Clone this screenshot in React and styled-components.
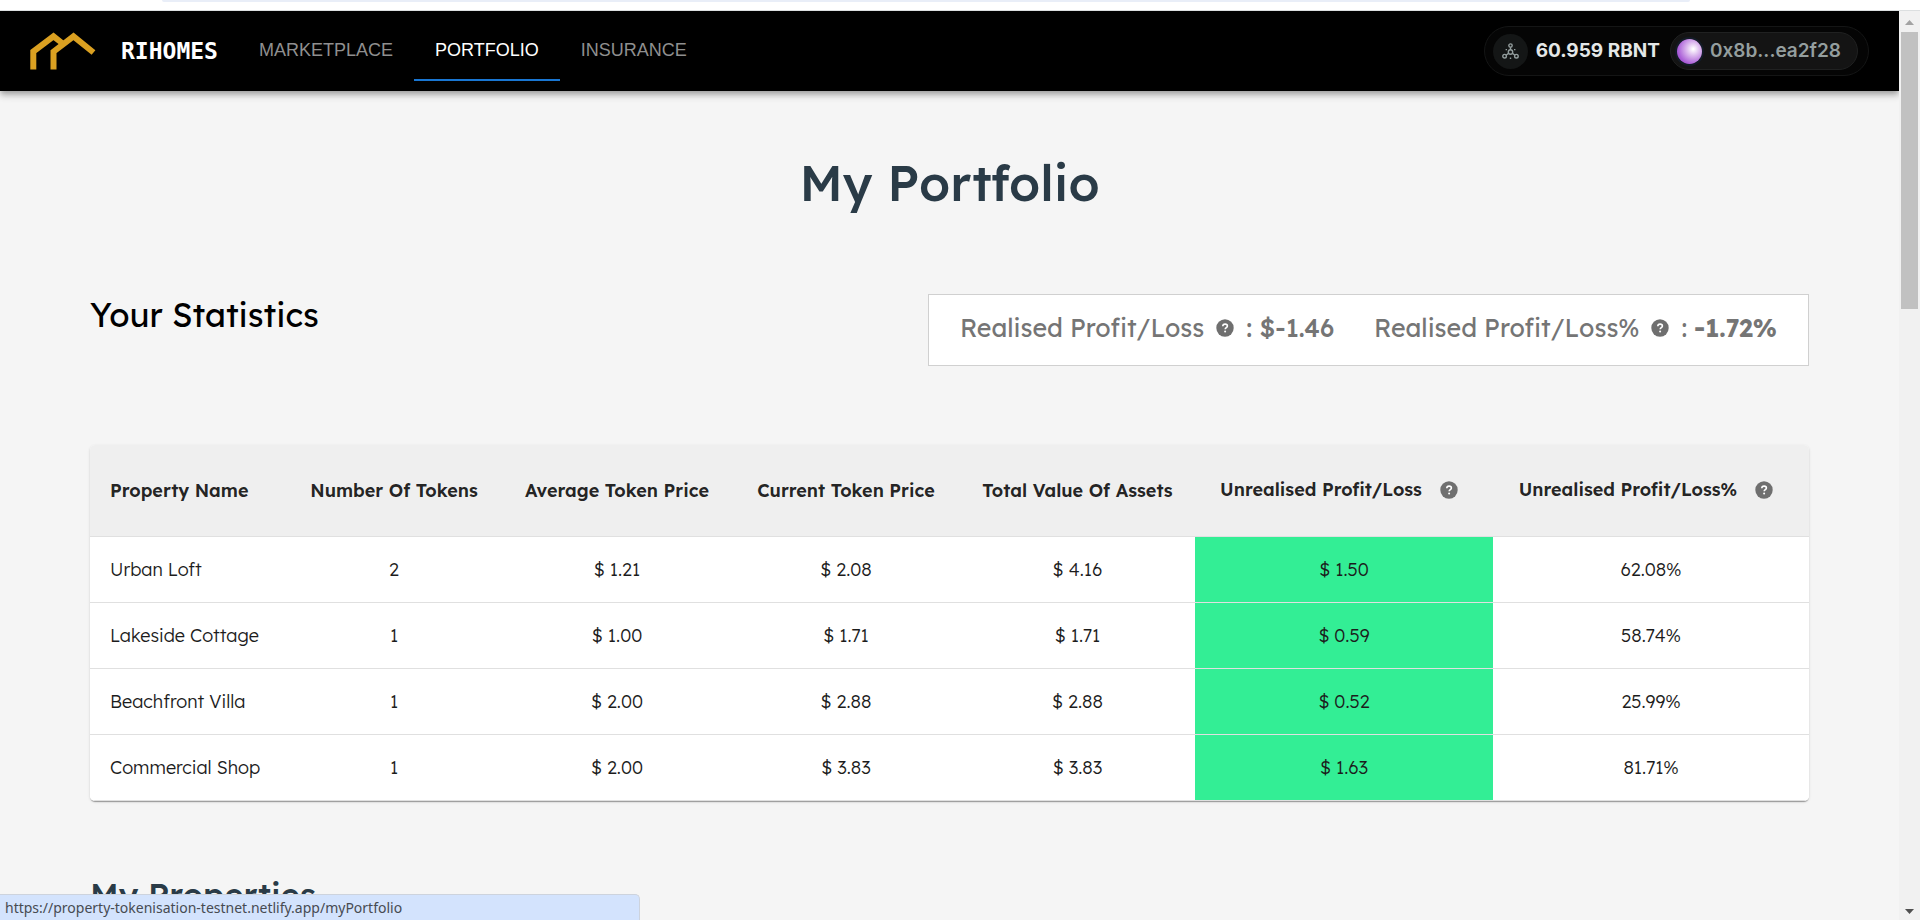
import React from "react";
import styled, { createGlobalStyle, css } from "styled-components";

const GlobalStyle = createGlobalStyle`
  *, *::before, *::after { box-sizing: border-box; }
  body { margin: 0; background: #f5f5f5; font-family: Lexend, Inter, sans-serif; color: rgba(0, 0, 0, 0.87); }
  h1, h2 { margin: 0; }
`;

const Screen = styled.div`
  display: grid;
  grid-template-rows: 11px minmax(0, 1fr);
  height: 100vh;
  overflow: hidden;
`;

const BrowserEdge = styled.div`
  padding: 0 230px 0 162px;
  background: #fff;
  border-bottom: 1px solid #dcdfe0;
`;

const AddressBar = styled.div`
  height: 2px;
  background: #e9eef8;
  border-radius: 0 0 6px 6px;
`;

const Viewport = styled.div`
  display: grid;
  grid-template-columns: minmax(0, 1fr) 21px;
  min-height: 0;
`;

const Page = styled.div`
  overflow: hidden;
`;

const AppBar = styled.header`
  display: flex;
  align-items: center;
  height: 80px;
  padding: 0 30px;
  background: #000;
  box-shadow: 0 3px 5px -1px rgba(0, 0, 0, 0.2), 0 5px 6px rgba(0, 0, 0, 0.14), 0 1px 12px rgba(0, 0, 0, 0.12);
`;

const Logo = styled.svg`
  width: 66px;
  height: 40px;
  fill: none;
  stroke: #daa021;
  stroke-width: 6;
`;

const Brand = styled.a`
  margin-left: 25px;
  color: #fff;
  font: 700 23px/30px "DejaVu Sans Mono", monospace;
  text-decoration: none;
`;

const Tabs = styled.nav`
  display: flex;
  margin-left: 20px;
`;

const Tab = styled.a`
  padding: 18px 21px;
  border-bottom: 2px solid ${(p) => (p.$active ? "#1976d2" : "transparent")};
  color: ${(p) => (p.$active ? "#fff" : "#8f8f8f")};
  font: 18px/22px "Liberation Sans", Arial, sans-serif;
  text-decoration: none;
`;

const Wallet = styled.div`
  display: flex;
  align-items: center;
  height: 50px;
  margin-left: auto;
  padding: 0 10px 0 8px;
  background: #050505;
  border: 1px solid #141515;
  border-radius: 25px;
  color: #e4e7e7;
  font: 700 19px/26px Inter, sans-serif;
`;

const Network = styled.span`
  display: grid;
  place-items: center;
  width: 35px;
  height: 35px;
  margin-right: 8px;
  background: #141616;
  border-radius: 50%;

  svg { width: 17px; height: 17px; fill: none; stroke: #949e9e; stroke-width: 1.4; }
`;

const Account = styled.button`
  display: flex;
  align-items: center;
  gap: 8px;
  height: 38px;
  margin-left: 10px;
  padding: 0 16px 0 6px;
  background: #141414;
  border: 1px solid #202121;
  border-radius: 19px;
  color: #949e9e;
  font: 600 19px/26px Inter, sans-serif;
`;

const Avatar = styled.span`
  width: 25px;
  height: 25px;
  border-radius: 50%;
  background: radial-gradient(circle at 65% 40%, #fff 2%, #dcb9ee 30%, #ab5fd8 68%, #8a36c8 100%);
  box-shadow: 0 0 0 2px #141c28;
`;

const Main = styled.main`
  padding: 60px 90px;
`;

const Title = styled.h1`
  color: #2a3b47;
  font-size: 50px;
  font-weight: 500;
  line-height: 64px;
  text-align: center;
`;

const Summary = styled.section`
  display: flex;
  justify-content: space-between;
  align-items: flex-start;
  margin: 79px 0;
`;

const Heading = styled.h2`
  color: ${(p) => (p.$tone === "slate" ? "#2a3b47" : "#000")};
  font-size: 33px;
  font-weight: ${(p) => (p.$tone === "slate" ? 500 : 400)};
  line-height: 42px;
`;

const Totals = styled.div`
  display: flex;
  gap: 40px;
  padding: 17px 31px 21px;
  background: #fff;
  border: 1px solid #d0d0d0;
  color: #757575;
  font-size: 25px;
  font-weight: 400;
  line-height: 32px;
`;

const Total = styled.span`
  display: flex;
  align-items: center;
  gap: 12px;
  white-space: nowrap;

  b { font-weight: 500; }
  strong { font-weight: 700; }
`;

const HelpIcon = styled.svg`
  flex: none;
  width: 18px;
  height: 18px;
`;

const TableCard = styled.div`
  overflow: hidden;
  background: #fff;
  border-radius: 5px;
  box-shadow: 0 2px 1px -1px rgba(0, 0, 0, 0.2), 0 1px 1px rgba(0, 0, 0, 0.14), 0 1px 3px rgba(0, 0, 0, 0.12);
`;

const Table = styled.table`
  width: 100%;
  table-layout: fixed;
  border-collapse: separate;
  border-spacing: 0;
`;

const cell = css`
  padding: 0;
  border-bottom: 1px solid #e0e0e0;
  text-align: center;
  white-space: nowrap;

  &:first-child { padding-left: 20px; text-align: left; }
`;

const HeadCell = styled.th`
  ${cell}
  height: 92px;
  background: #efefef;
  font-size: 18px;
  font-weight: 600;
  line-height: 24px;
`;

const HeadWithHelp = styled.span`
  display: flex;
  justify-content: center;
  align-items: center;
  gap: 18px;
  padding: 0 10px 2px 0;
`;

const Cell = styled.td`
  ${cell}
  height: 66px;
  background: ${(p) => (p.$gain ? "#33ee95" : "#fff")};
  color: #1c1c1c;
  font-size: 18px;
  font-weight: 300;
  line-height: 24px;
`;

const Properties = styled.section`
  margin-top: 73px;
`;

const ScrollBar = styled.div`
  display: flex;
  flex-direction: column;
  align-items: center;
  padding: 9px 2px 6px;
  background: #f1f1f1;
`;

const Arrow = styled.svg`
  width: 9px;
  height: 5px;
  fill: ${(p) => p.$fill};
`;

const Thumb = styled.div`
  width: 100%;
  height: 31%;
  margin: 7px 0 auto;
  background: #c1c1c1;
`;

const StatusBar = styled.div`
  position: fixed;
  left: 0;
  bottom: 0;
  width: 640px;
  max-width: 100%;
  padding: 3px 5px 2px;
  background: #d3e3fd;
  border: 1px solid #cdd3dd;
  border-width: 1px 1px 0 0;
  border-radius: 0 5px 0 0;
  color: #474b52;
  font: 14px/20px "Noto Sans", sans-serif;
`;

const COLUMNS = [
  { name: "Property Name", width: 196 },
  { name: "Number Of Tokens", width: 216 },
  { name: "Average Token Price", width: 230 },
  { name: "Current Token Price", width: 228 },
  { name: "Total Value Of Assets", width: 235 },
  { name: "Unrealised Profit/Loss", width: 298, help: true },
  { name: "Unrealised Profit/Loss%", width: 316, help: true },
];

const HOLDINGS = [
  ["Urban Loft", "2", "$ 1.21", "$ 2.08", "$ 4.16", "$ 1.50", "62.08%"],
  ["Lakeside Cottage", "1", "$ 1.00", "$ 1.71", "$ 1.71", "$ 0.59", "58.74%"],
  ["Beachfront Villa", "1", "$ 2.00", "$ 2.88", "$ 2.88", "$ 0.52", "25.99%"],
  ["Commercial Shop", "1", "$ 2.00", "$ 3.83", "$ 3.83", "$ 1.63", "81.71%"],
];

const GAIN_COLUMN = 5;

function Help() {
  return (
    <HelpIcon viewBox="0 0 18 18" aria-label="Help">
      <circle cx="9" cy="9" r="8.7" fill="#6f6f6f" />
      <path d="M6.8 7.2c0-1.3 1-2.1 2.3-2.1s2.3.8 2.3 1.9c0 1.6-2.2 1.6-2.2 3.2" fill="none" stroke="#fff" strokeWidth="1.6" />
      <circle cx="9.1" cy="12.4" r="1" fill="#fff" />
    </HelpIcon>
  );
}

export default function App() {
  return (
    <Screen>
      <GlobalStyle />
      <BrowserEdge><AddressBar /></BrowserEdge>
      <Viewport>
        <Page>
          <AppBar>
            <Logo viewBox="0 0 66 40" aria-hidden="true">
              <path d="M3.3 38.5V20.5L23.5 5.3L32 12" />
              <path d="M23.5 38.5V20.7L43.5 5.3L63.5 21.5" />
            </Logo>
            <Brand href="#home">RIHOMES</Brand>
            <Tabs>
              <Tab href="#marketplace">MARKETPLACE</Tab>
              <Tab href="#portfolio" $active>PORTFOLIO</Tab>
              <Tab href="#insurance">INSURANCE</Tab>
            </Tabs>
            <Wallet>
              <Network>
                <svg viewBox="0 0 17 17" aria-hidden="true">
                  <circle cx="8.5" cy="2.6" r="1.7" />
                  <circle cx="8.5" cy="9" r="2.2" />
                  <circle cx="2.6" cy="13.2" r="1.8" />
                  <circle cx="14.4" cy="13.2" r="1.8" />
                  <path d="M8.5 4.3v2.5M6.6 10.3l-2.5 1.9M10.4 10.3l2.5 1.9M3.6 6.6h1.4M12 6.6h1.4M7.8 15.2h1.4" />
                </svg>
              </Network>
              60.959 RBNT
              <Account type="button"><Avatar />0x8b...ea2f28</Account>
            </Wallet>
          </AppBar>
          <Main>
            <Title>My Portfolio</Title>
            <Summary>
              <Heading>Your Statistics</Heading>
              <Totals>
                <Total>Realised Profit/Loss <Help /><b>: $-1.46</b></Total>
                <Total>Realised Profit/Loss% <Help /><span>: <strong>-1.72%</strong></span></Total>
              </Totals>
            </Summary>
            <TableCard>
              <Table>
                <colgroup>
                  {COLUMNS.map((c) => <col key={c.name} width={c.width} />)}
                </colgroup>
                <thead>
                  <tr>
                    {COLUMNS.map((c) => (
                      <HeadCell key={c.name} scope="col">
                        {c.help ? <HeadWithHelp>{c.name}<Help /></HeadWithHelp> : c.name}
                      </HeadCell>
                    ))}
                  </tr>
                </thead>
                <tbody>
                  {HOLDINGS.map((row) => (
                    <tr key={row[0]}>
                      {row.map((value, i) => <Cell key={i} $gain={i === GAIN_COLUMN}>{value}</Cell>)}
                    </tr>
                  ))}
                </tbody>
              </Table>
            </TableCard>
            <Properties>
              <Heading $tone="slate">My Properties</Heading>
            </Properties>
          </Main>
        </Page>
        <ScrollBar aria-hidden="true">
          <Arrow viewBox="0 0 9 5" $fill="#a3a3a3"><path d="M0 5L4.5 0L9 5z" /></Arrow>
          <Thumb />
          <Arrow viewBox="0 0 9 5" $fill="#505050"><path d="M0 0L4.5 5L9 0z" /></Arrow>
        </ScrollBar>
      </Viewport>
      <StatusBar>https://property-tokenisation-testnet.netlify.app/myPortfolio</StatusBar>
    </Screen>
  );
}
